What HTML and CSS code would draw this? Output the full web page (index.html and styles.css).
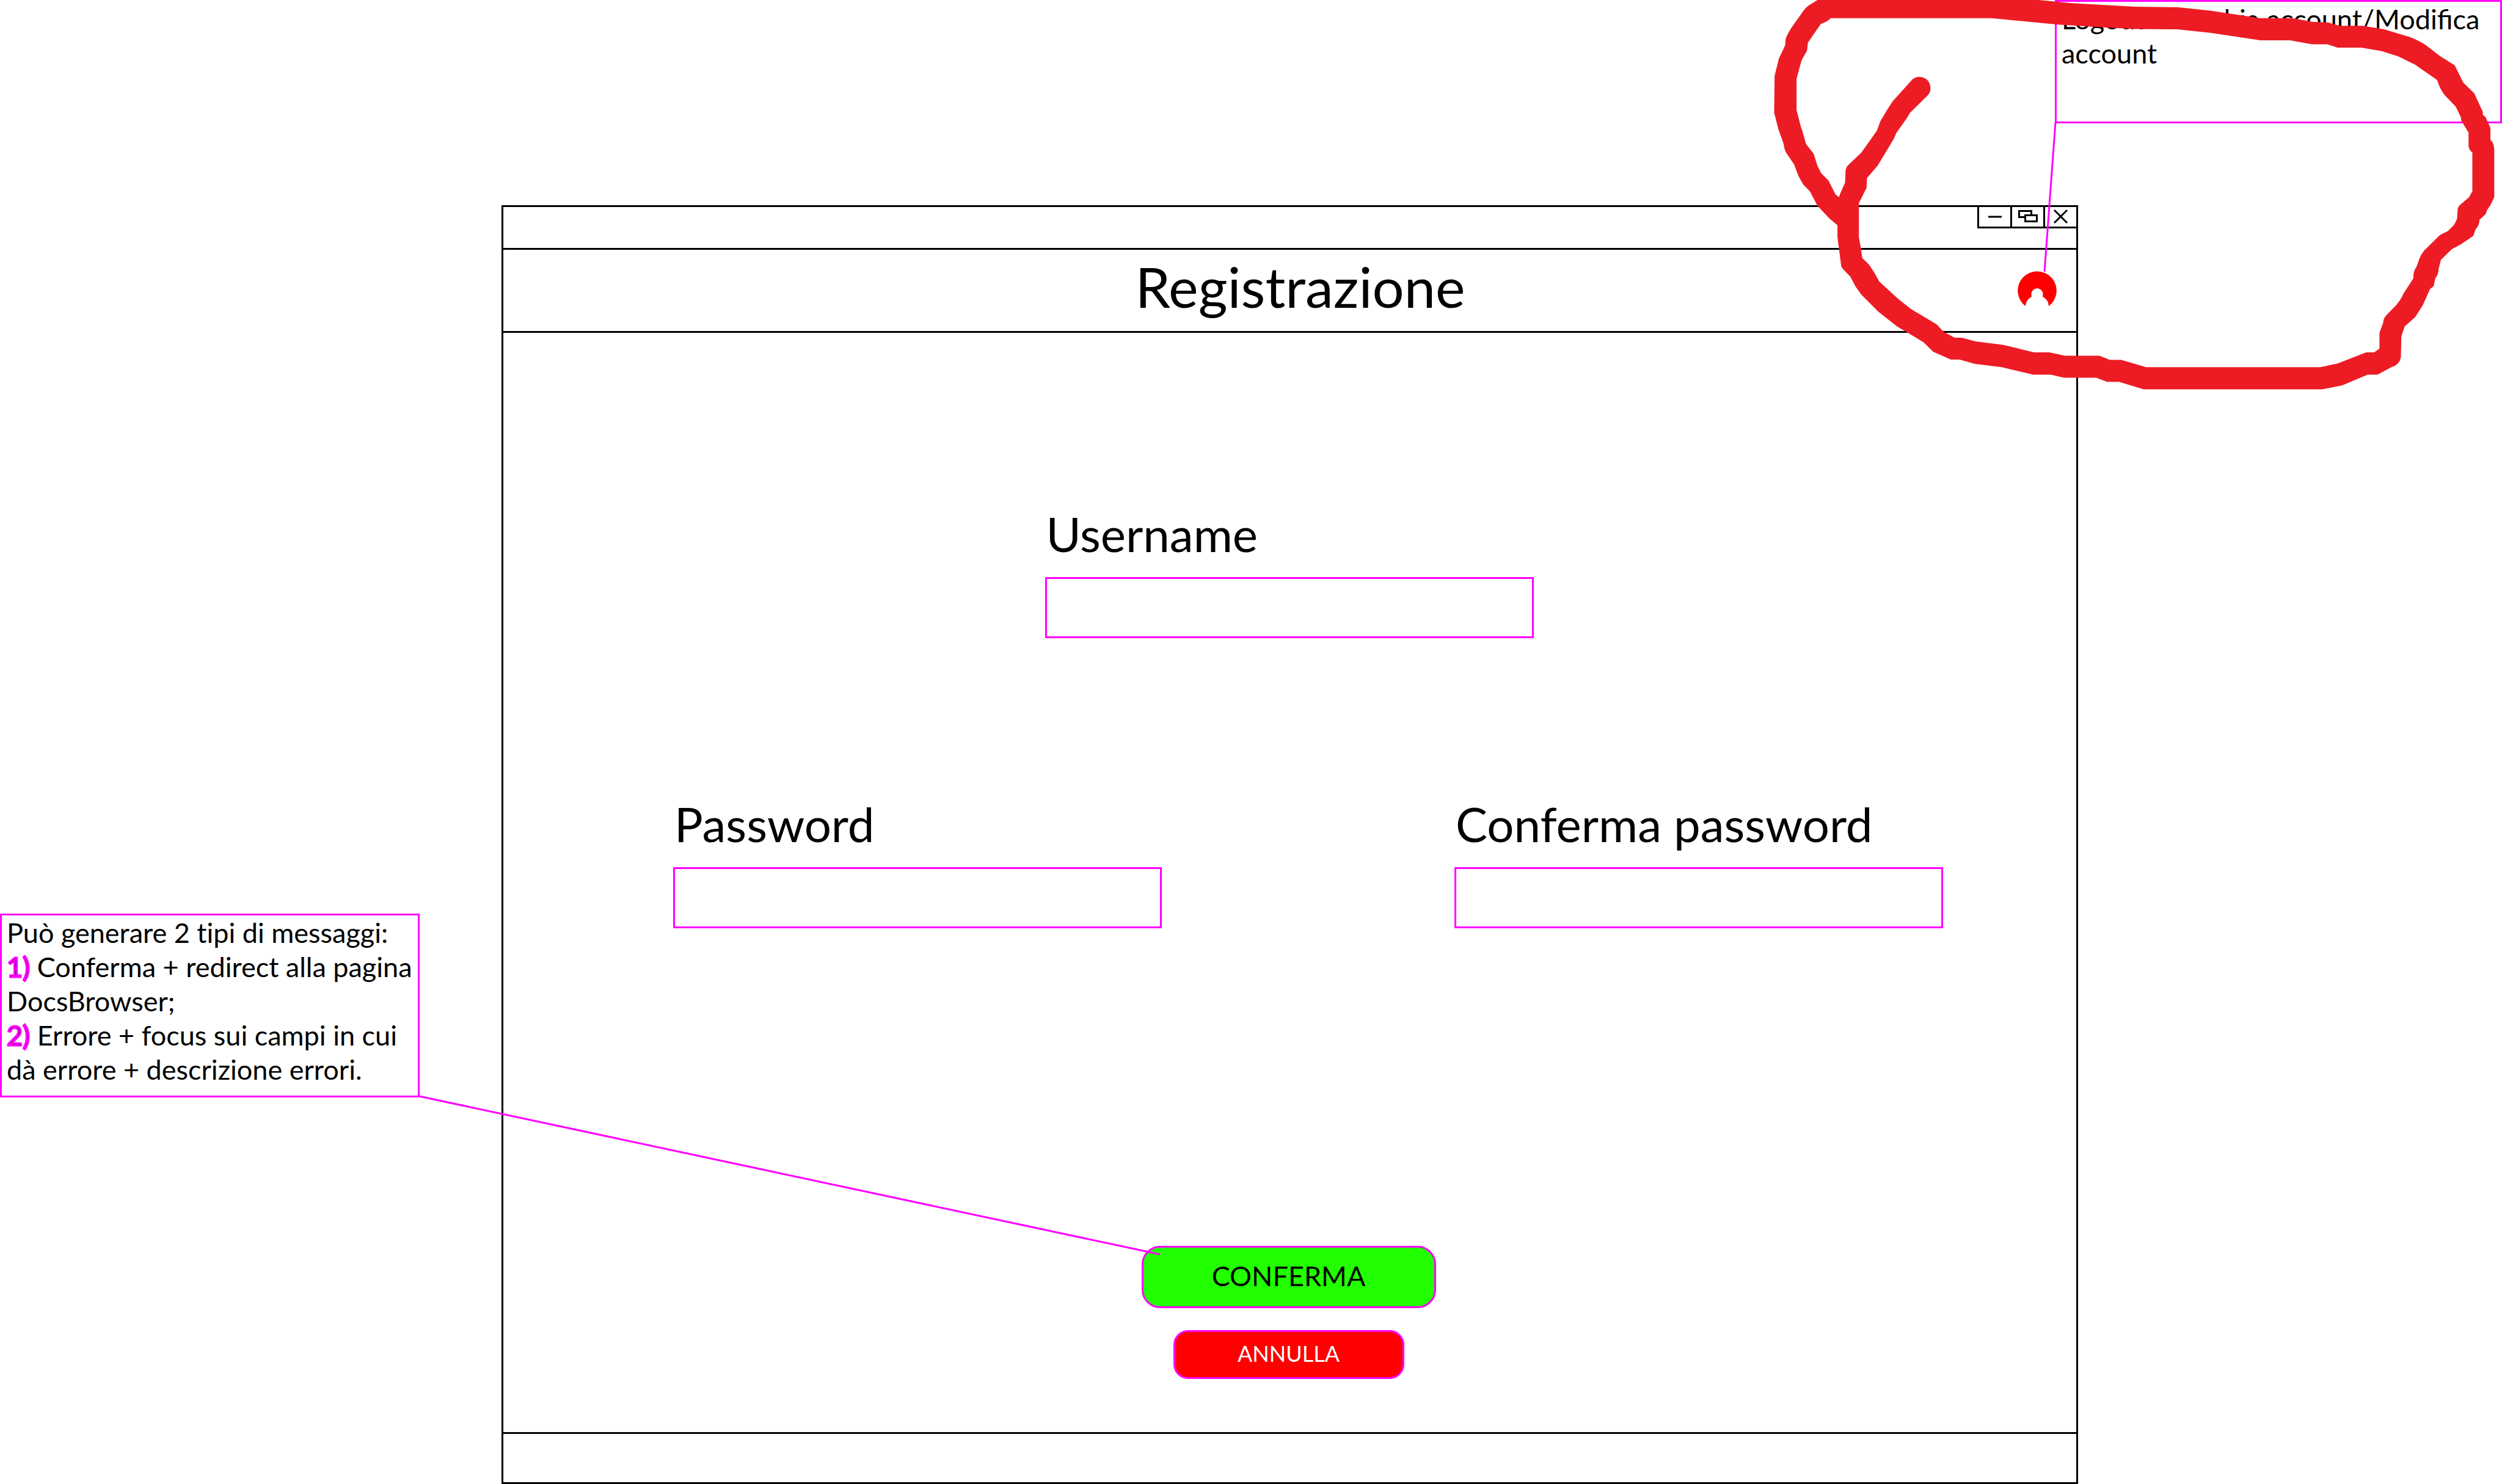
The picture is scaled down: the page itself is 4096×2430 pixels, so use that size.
FILE: index.html
```html
<!DOCTYPE html>
<html lang="it">
<head>
<meta charset="utf-8">
<title>Registrazione</title>
<link rel="stylesheet" href="styles.css">
</head>
<body>
<div class="board">
  <section class="window">
    <div class="titlebar">
      <button class="control" type="button" aria-label="Riduci a icona">
        <svg class="control-icon" viewBox="0 0 36 30"><path d="M7 15H29"/></svg>
      </button>
      <button class="control" type="button" aria-label="Ripristina">
        <svg class="control-icon" viewBox="0 0 36 30"><path d="M13.500 15.500H3.500V5.500H23.500V12"/><path d="M13.500 12.500H32.500V22.500H13.500Z"/></svg>
      </button>
      <button class="control" type="button" aria-label="Chiudi">
        <svg class="control-icon" viewBox="0 0 36 30"><path d="M7 4L28 25M28 4L7 25"/></svg>
      </button>
    </div>
    <header class="header">
      <h1 class="title">Registrazione</h1>
      <button class="account" type="button" aria-label="Account">
        <svg class="account-icon" viewBox="0 0 84 84"><path fill="#f00" d="M17 75.300A41.700 41.700 0 1 1 67 75.300A25 25 0 0 0 53.500 54.500A12.500 12.500 0 1 0 30.500 54.500A25 25 0 0 0 17 75.300Z"/></svg>
      </button>
    </header>
    <form class="form">
      <div class="row row-center">
        <div class="field">
          <label class="label" for="username">Username</label>
          <input class="input" id="username" type="text">
        </div>
      </div>
      <div class="row row-split">
        <div class="field">
          <label class="label" for="password">Password</label>
          <input class="input" id="password" type="password">
        </div>
        <div class="field">
          <label class="label" for="confirm">Conferma password</label>
          <input class="input" id="confirm" type="password">
        </div>
      </div>
      <div class="actions">
        <button class="button button-confirm" type="button">CONFERMA</button>
        <button class="button button-cancel" type="button">ANNULLA</button>
      </div>
    </form>
    <footer class="footer"></footer>
  </section>
  <aside class="note note-account">Logout - Cambia account/Modifica<br>account</aside>
  <aside class="note note-messages">Può generare 2 tipi di messaggi:<br><span class="number">1)</span> Conferma + redirect alla pagina<br>DocsBrowser;<br><span class="number">2)</span> Errore + focus sui campi in cui<br>dà errore + descrizione errori.</aside>
  <svg class="ink" viewBox="0 0 4096 2430" aria-hidden="true">
    <path class="connector" d="M3365 200L3347 445M686 1795L1899 2054"/>
    <path class="marker" transform="translate(2874 0) scale(.7797 .4364)" d="M330 297L288 380L277 410L262 455L255 490L222 573L197 615Q190 625 189 640L188 685L178 725L174 745L172 790V890L176 945L180 1000L185 1012L199 1038L210 1075L222 1105L258 1170L297 1225L335 1265L353 1285L373 1320L410 1349H428L460 1365L517 1378L583 1406H620L648 1417H715L738 1433H763L815 1461H1190L1232 1446L1285 1406H1306L1335 1378Q1352 1370 1355 1340L1356 1262L1363 1225L1385 1190L1401 1145L1416 1085L1424 1073L1427 1045Q1434 1030 1434 1010L1439 975L1462 935L1480 918L1507 885L1512 860Q1520 845 1520 825L1533 803L1536 788L1543 770L1551 740V560Q1550 535 1543 525V480L1533 440L1527 430V420L1509 350L1486 310L1468 245L1437 210L1408 170Q1390 150 1375 140L1320 110L1275 97H1226L1202 84L1170 82L1127 68H1060L955 40L885 27L798 25L665 12L595 0V-20H130V0L112 20Q105 28 100 42L75 105Q63 140 63 150L62 170L49 220L40 285L39 423L48 485L59 540Q60 560 65 575L81 617L90 660L100 692L114 718L130 772L155 820L172 845L200 800L174 738L168 730L153 677L138 650L130 622L122 577L106 540L98 490L95 475L86 412V297L93 250L97 225L108 190L110 160L137 90Q150 82 158 68H495L635 92L750 105L798 109L885 110L955 123L1060 151H1122L1168 166H1200L1222 179H1272L1315 192L1350 212L1385 243L1431 300Q1436 330 1446 355L1470 400L1481 440Q1481 455 1486 465L1497 497V550Q1500 568 1505 572V718L1498 740L1482 765Q1474 775 1474 790L1473 820Q1470 835 1466 845L1453 868Q1440 878 1435 885L1404 940Q1397 955 1394 970L1388 1000Q1381 1015 1381 1045L1360 1103Q1355 1125 1345 1145L1325 1182Q1318 1195 1318 1210L1310 1248V1308L1299 1322H1282L1222 1364L1185 1378H820L768 1350H744L722 1335H650L617 1322H585L520 1294L462 1281L433 1267H418L395 1245L380 1217L325 1158L300 1122L260 1057L250 1025L238 992L224 968L221 930L217 890V762L233 705L234 668L256 622L262 605L290 522L296 498L317 445L324 424L362 357A23 41 0 0 0 367 325A23 41 0 0 0 330 297Z"/>
  </svg>
</div>
</body>
</html>
```
FILE: styles.css
```css
* {
  box-sizing: border-box;
}

body {
  margin: 0;
  background: #fff;
  color: #000;
  font-family: Lato, "Open Sans", sans-serif;
}

.board {
  position: relative;
  display: grid;
  grid-template-columns: 687fr 134fr 2543fr 38fr 694fr;
  grid-template-rows: 336px 1fr;
  min-height: 100vh;
  overflow: hidden;
}

button {
  margin: 0;
  padding: 0;
  border: 0;
  background: none;
  color: inherit;
  font-family: inherit;
}

/* Application window */
.window {
  grid-column: 3 / 5;
  grid-row: 2;
  display: flex;
  flex-direction: column;
  border: 3px solid #000;
}

.titlebar {
  display: flex;
  justify-content: flex-end;
  align-items: flex-start;
  height: 70px;
  border-bottom: 3px solid #000;
}

.control {
  display: flex;
  justify-content: center;
  align-items: center;
  width: 54px;
  height: 35px;
  border-left: 3px solid #000;
  border-bottom: 3px solid #000;
}

.control-icon {
  width: 36px;
  height: 30px;
  fill: none;
  stroke: #000;
  stroke-width: 3;
}

.header {
  display: flex;
  justify-content: space-between;
  align-items: center;
  height: 136px;
  padding-right: 32px;
  padding-left: 130px;
  border-bottom: 3px solid #000;
}

.title {
  flex: 1;
  margin: 0;
  padding-bottom: 14px;
  font-size: 92px;
  font-weight: 400;
  line-height: 118px;
  text-align: center;
}

.account-icon {
  display: block;
  width: 64px;
  height: 64px;
}

.form {
  flex: 1;
  display: flex;
  flex-direction: column;
  padding-top: 280px;
  padding-bottom: 87px;
}

.row {
  display: flex;
}

.row-center {
  justify-content: center;
  margin-bottom: 255px;
  padding-right: 2px;
}

.row-split {
  justify-content: space-between;
  padding-right: 218px;
  padding-left: 278px;
}

.field {
  width: 800px;
}

.label {
  display: block;
  margin-bottom: 22px;
  padding-left: 2px;
  font-size: 78px;
  line-height: 98px;
}

.input {
  display: block;
  width: 100%;
  height: 100px;
  padding: 0 16px;
  border: 3px solid #f0f;
  border-radius: 0;
  background: #fff;
  font-family: inherit;
  font-size: 45px;
}

.actions {
  display: flex;
  flex-direction: column;
  align-items: center;
  gap: 36px;
  margin-top: auto;
  padding-right: 4px;
}

.button {
  padding-bottom: 4px;
  border: 3px solid #f0f;
}

.button-confirm {
  width: 482px;
  height: 102px;
  border-radius: 30px;
  background: #21ff00;
  font-size: 45px;
}

.button-cancel {
  width: 378px;
  height: 80px;
  border-radius: 24px;
  background: #f00;
  color: #fff;
  font-size: 36px;
}

.footer {
  height: 82px;
  border-top: 3px solid #000;
}

/* Annotations */
.note {
  align-self: start;
  padding-left: 8px;
  border: 3px solid #f0f;
  font-size: 45px;
  line-height: 57px;
  white-space: nowrap;
}

.note-account {
  grid-column: 4 / 6;
  grid-row: 1;
  height: 202px;
  line-height: 56px;
}

.note-messages {
  grid-column: 1;
  grid-row: 2;
  display: flow-root;
  height: 301px;
  margin-top: 1160px;
  font-variant-ligatures: none;
  line-height: 56px;
}

.number {
  -webkit-text-stroke: 3px #f0f;
}

.ink {
  position: absolute;
  top: 0;
  left: 0;
  width: 100%;
  pointer-events: none;
}

.connector {
  fill: none;
  stroke: #f0f;
  stroke-width: 3;
}

.marker {
  fill: #ed1c24;
}
```
